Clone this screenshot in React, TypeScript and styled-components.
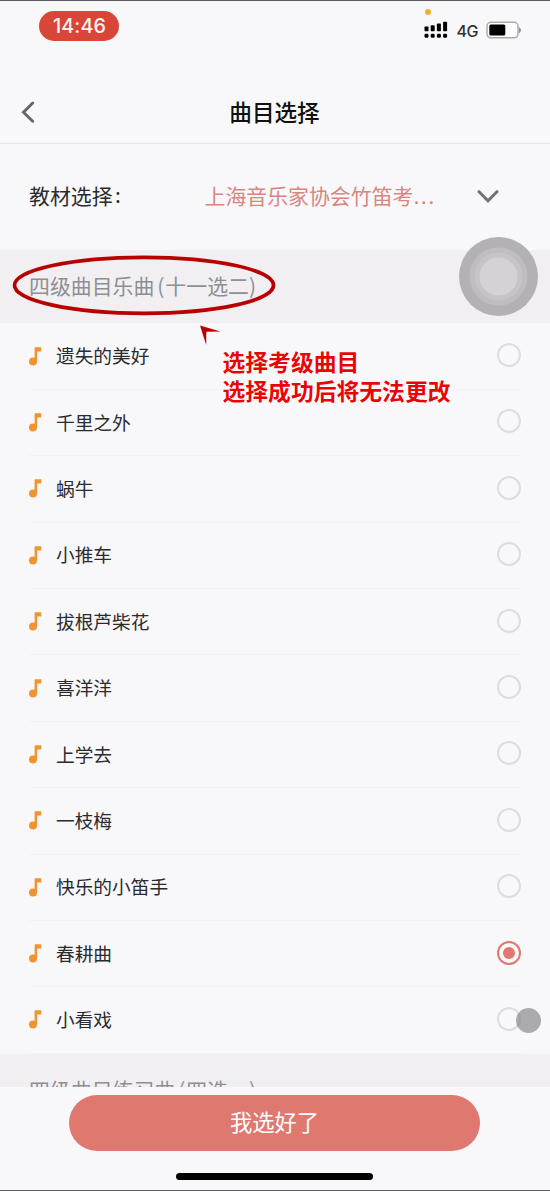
import React, { useState } from "react";
import styled, { createGlobalStyle } from "styled-components";

const Global = createGlobalStyle`
  * { box-sizing: border-box; }
  body { margin: 0; background: #f8f8fb; }
  button { font: inherit; border: 0; padding: 0; background: none; }
`;

const Screen = styled.div`
  position: relative;
  display: flex;
  flex-direction: column;
  height: 1191px;
  overflow: hidden;
  background: #f8f8fb;
  color: #2b2b2e;
  border: solid #5c5a5e;
  border-width: 1px 0;
  font-family: "Noto Sans CJK SC", sans-serif;
`;

const StatusBar = styled.div`
  display: flex;
  flex: none;
  height: 80px;
  padding: 10px 28px 0 39px;
  justify-content: space-between;
  align-items: flex-start;
`;

const Clock = styled.div`
  width: 80px;
  height: 30px;
  border-radius: 15px;
  background: #d94638;
  color: #fdf3f2;
  font: 450 19.8px/30px Inter, sans-serif;
  letter-spacing: 0.1px;
  padding-left: 1px;
  text-align: center;
`;

const StatusIcons = styled.div`
  display: flex;
  align-items: center;
  height: 34px;
  margin-top: 2px;
`;

const Network = styled.span`
  width: 22px;
  margin: 2px 7.5px 0 8.5px;
  color: #333;
  font: 450 16px/20px Inter, sans-serif;
  letter-spacing: -0.4px;
`;

const MicDot = styled.i`
  position: absolute;
  left: 425px;
  top: 8px;
  width: 6px;
  height: 6px;
  border-radius: 50%;
  background: #f5ac37;
`;

const NavBar = styled.header`
  display: grid;
  grid-template-columns: 60px 1fr 60px;
  flex: none;
  height: 63px;
  align-items: center;
  border-bottom: 1px solid #e4e4e7;
`;

const BackButton = styled.button`
  display: flex;
  padding-left: 20px;
`;

const Title = styled.h1`
  margin: 0 0 0 -1px;
  text-align: center;
  font-size: 22.6px;
  line-height: 32px;
  font-weight: 500;
  color: #111;
`;

const BookPicker = styled.div`
  display: flex;
  flex: none;
  align-items: center;
  height: 106px;
  padding: 0 51px 0 29px;
  font-size: 20.9px;
`;

const PickerLabel = styled.span`
  width: 175.5px;
  margin-bottom: 4px;
`;

const Colon = styled.span`
  display: inline-block;
  margin-left: 2.5px;
  transform: translateY(-1px);
`;

const PickerValue = styled.span`
  flex: 1;
  margin-bottom: 4px;
  color: #d98580;
  white-space: nowrap;
`;

const Ellipsis = styled.span`
  font-family: Inter, sans-serif;
  letter-spacing: 1.4px;
`;

const SongScroll = styled.main`
  height: 837px;
  flex: none;
  overflow: hidden;
`;

const SectionHead = styled.h2`
  margin: 0;
  height: 73.4px;
  padding-left: 29px;
  background: #f1eff2;
  color: #8f8e92;
  font-size: 20.9px;
  font-weight: 400;
  line-height: 71px;
`;

const Paren = styled.span<{ $open?: boolean }>`
  display: inline-block;
  width: ${(p) => (p.$open ? 11 : 8)}px;
  padding-left: ${(p) => (p.$open ? 3 : 0)}px;
`;

const SongList = styled.ul`
  margin: 0;
  padding: 0 29px;
  list-style: none;
`;

const SongRow = styled.li`
  display: flex;
  align-items: center;
  height: 66.4px;
  border-bottom: 1px solid #f2f1f4;
  font-size: 18.7px;
`;

const SongName = styled.span`
  flex: 1;
  margin: 0 0 2.6px 14px;
`;

const Radio = styled.button<{ $checked: boolean }>`
  display: grid;
  place-items: center;
  width: 24px;
  height: 24px;
  margin-bottom: 2px;
  border: 2px solid ${(p) => (p.$checked ? "#df786f" : "#dddde0")};
  border-radius: 50%;
  &::after {
    content: "";
    width: 12px;
    height: 12px;
    border-radius: 50%;
    background: ${(p) => (p.$checked ? "#df786f" : "transparent")};
  }
`;

const Footer = styled.footer`
  display: flex;
  flex: 1;
  flex-direction: column;
  align-items: center;
  padding: 8px 1px 0 0;
`;

const ConfirmButton = styled.button`
  width: 411px;
  height: 56px;
  border-radius: 28px;
  background: #df786f;
  color: #fff;
  font-size: 22.3px;
  line-height: 53px;
  font-weight: 400;
  padding-bottom: 3px;
`;

const HomeBar = styled.div`
  width: 197px;
  height: 7px;
  margin-top: 22px;
  border-radius: 4px;
  background: #000;
`;

const AssistiveTouch = styled.div`
  position: absolute;
  left: 459px;
  top: 236px;
  width: 79px;
  height: 79px;
  border-radius: 50%;
  background: radial-gradient(
    circle,
    #d4d2d5 0 18.7px,
    #c6c4c7 19.3px 23.7px,
    #bfbdc0 24.3px 28.7px,
    #b3b1b4 29.3px
  );
`;

const TouchDot = styled.div`
  position: absolute;
  left: 516px;
  top: 1007px;
  width: 25px;
  height: 25px;
  border-radius: 50%;
  background: rgba(125, 125, 127, 0.63);
`;

const Markup = styled.svg`
  position: absolute;
  left: 0;
  top: 249px;
`;

const Note = styled.p`
  position: absolute;
  left: 222.5px;
  top: 346px;
  margin: 0;
  color: #ea0505;
  font-size: 22.8px;
  font-weight: 700;
  line-height: 29px;
  white-space: nowrap;
  text-shadow: 0 0 2px #fff, 0 0 2px #fff;
`;

const songs = [
  "遗失的美好",
  "千里之外",
  "蜗牛",
  "小推车",
  "拔根芦柴花",
  "喜洋洋",
  "上学去",
  "一枝梅",
  "快乐的小笛手",
  "春耕曲",
  "小看戏",
];

const SignalIcon = () => (
  <svg width="24" height="18" viewBox="0 0 24 18">
    {[5.5, 4.2, 2.5, 0.7].map((y, i) => (
      <g key={y}>
        <rect x={0.5 + i * 6.2} y={y} width="4" height={10.3 - y} rx="0.8" />
        <rect x={0.5 + i * 6.2} y="12.7" width="4" height="4" rx="1.3" />
      </g>
    ))}
  </svg>
);

const BatteryIcon = () => (
  <svg width="36" height="18" viewBox="0 0 36 18">
    <rect x="1" y="1.3" width="31" height="15.5" rx="4" fill="#fff" stroke="#aaa9ac" strokeWidth="1.5" />
    <rect x="3.3" y="3.6" width="16" height="11" rx="1.5" />
    <path d="M33.5 6.8Q35.5 9.2 33.5 11.6Z" fill="#8e8d90" stroke="#8e8d90" />
  </svg>
);

const NoteIcon = () => (
  <svg width="13" height="19" viewBox="0 0 13 19">
    <circle cx="4" cy="14.4" r="4" fill="#ee9430" />
    <path d="M5.6 1Q5.6 0.2 6.4 0.2H12.3V4.5H8.2V14.4H5.6Z" fill="#ee9430" />
  </svg>
);

export default function App() {
  const [selected, setSelected] = useState(9);
  return (
    <Screen>
      <Global />
      <StatusBar>
        <Clock>14:46</Clock>
        <StatusIcons>
          <SignalIcon />
          <Network>4G</Network>
          <BatteryIcon />
        </StatusIcons>
      </StatusBar>
      <MicDot />
      <NavBar>
        <BackButton aria-label="返回">
          <svg width="16" height="24" viewBox="0 0 16 24" fill="none" stroke="#67676a" strokeWidth="3" strokeLinecap="round">
            <path d="M12.7 3L3.5 12.2L12.7 21.2" />
          </svg>
        </BackButton>
        <Title>曲目选择</Title>
      </NavBar>
      <BookPicker>
        <PickerLabel>
          教材选择<Colon>:</Colon>
        </PickerLabel>
        <PickerValue>
          上海音乐家协会竹笛考<Ellipsis>...</Ellipsis>
        </PickerValue>
        <svg width="22" height="14" viewBox="0 0 22 14" fill="none" stroke="#737376" strokeWidth="3" strokeLinecap="round">
          <path d="M2 1.7L11 10.8L20 1.7" />
        </svg>
      </BookPicker>
      <SongScroll>
        <SectionHead>
          四级曲目乐曲<Paren $open>(</Paren>十一选二<Paren>)</Paren>
        </SectionHead>
        <SongList>
          {songs.map((song, i) => (
            <SongRow key={song}>
              <NoteIcon />
              <SongName>{song}</SongName>
              <Radio aria-label={song} $checked={i === selected} onClick={() => setSelected(i)} />
            </SongRow>
          ))}
        </SongList>
        <SectionHead>
          四级曲目练习曲<Paren $open>(</Paren>四选一<Paren>)</Paren>
        </SectionHead>
      </SongScroll>
      <Footer>
        <ConfirmButton>我选好了</ConfirmButton>
        <HomeBar />
      </Footer>
      <AssistiveTouch />
      <TouchDot />
      <Markup width="300" height="100" viewBox="0 250 300 100">
        <ellipse cx="144" cy="285.3" rx="129.5" ry="28" fill="none" stroke="#b90000" strokeWidth="3.7" />
        <path d="M200 325.5L220.5 331.5L206.3 331.8L206.2 345Z" fill="#b90000" />
      </Markup>
      <Note>
        选择考级曲目
        <br />
        选择成功后将无法更改
      </Note>
    </Screen>
  );
}
